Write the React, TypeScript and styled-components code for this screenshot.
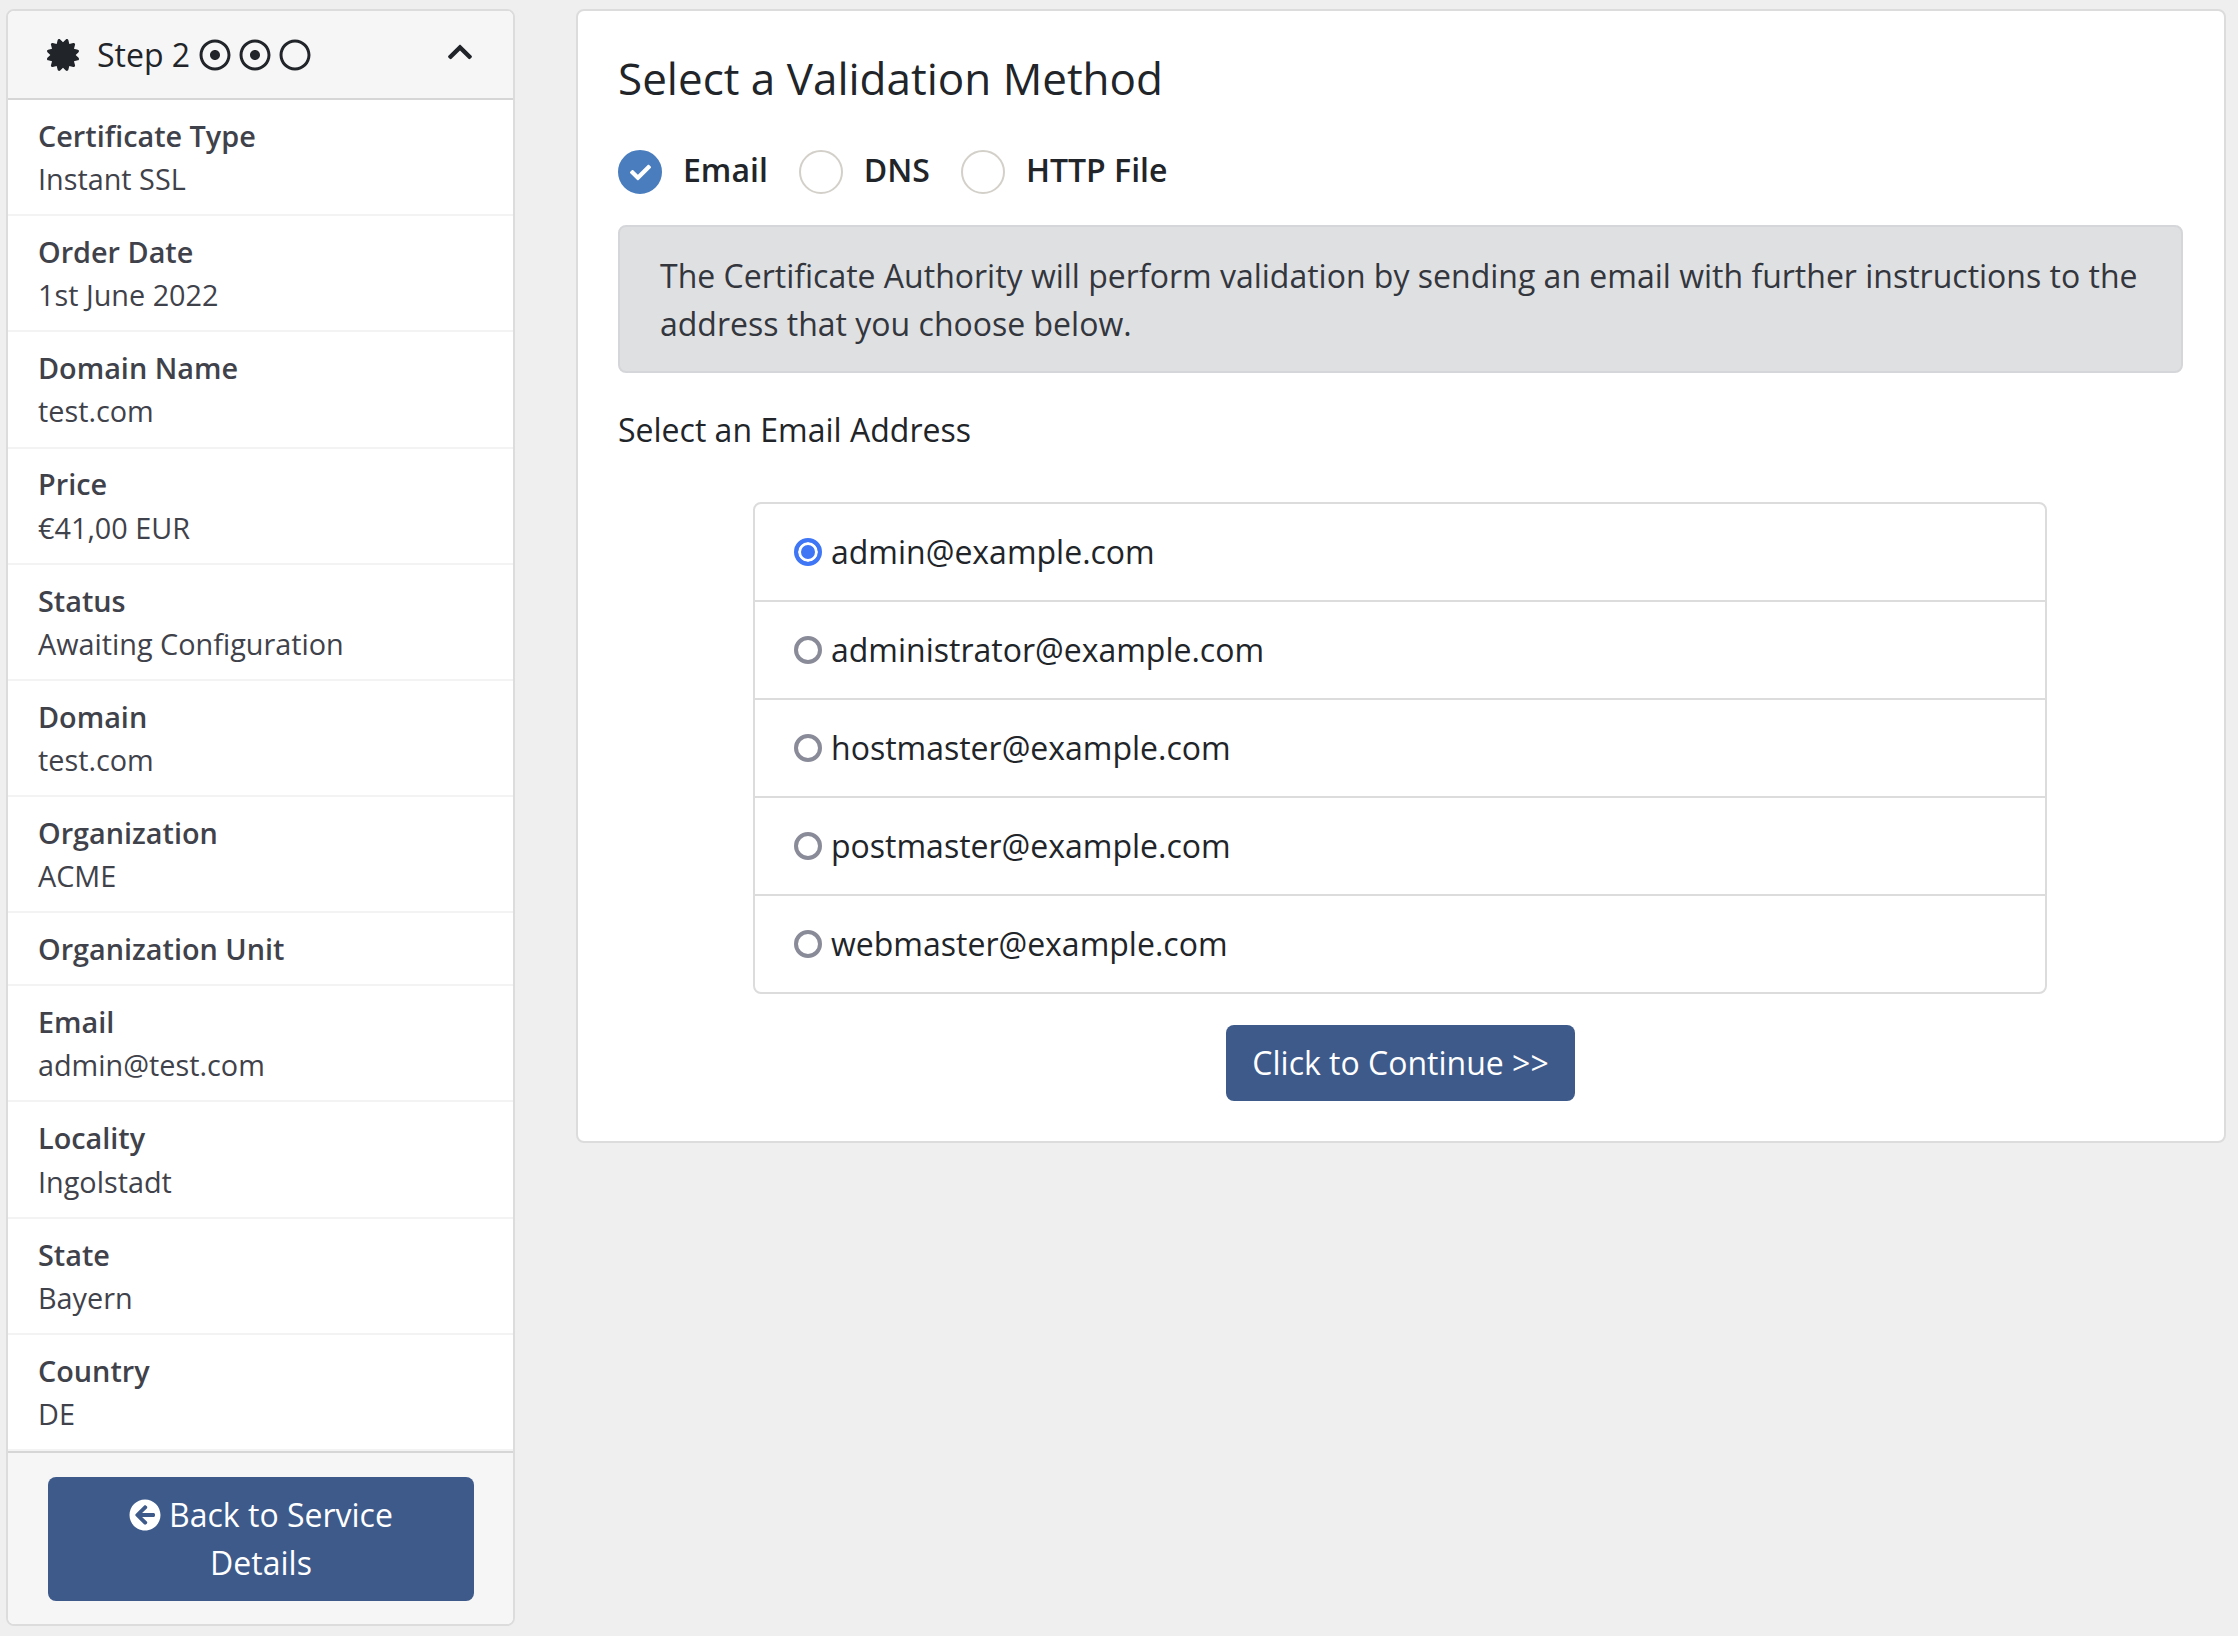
import React from "react";
import styled, { createGlobalStyle } from "styled-components";
import { FaCertificate, FaRegDotCircle, FaRegCircle, FaChevronUp, FaArrowCircleLeft, FaCheck } from "react-icons/fa";

const Global = createGlobalStyle`
  html, body { margin: 0; padding: 0; background: #efefef; }
  body { font-family: "Open Sans", "Noto Sans", sans-serif; color: #212529; font-size: 32px; line-height: 48px; }
  * { box-sizing: border-box; }
`;

const Page = styled.div`
  display: flex;
  align-items: flex-start;
  gap: 61px;
  padding: 9px 12px 0 6px;
  width: 2238px;
  height: 1636px;
  overflow: hidden;
`;

const Sidebar = styled.aside`
  width: 509px;
  flex: none;
  background: #fff;
  border: 2px solid #dcdcdc;
  border-radius: 8px;
  overflow: hidden;
`;

const SideHeader = styled.div`
  display: flex;
  align-items: center;
  height: 89px;
  padding: 0 39px 0 39px;
  background: #f6f6f6;
  border-bottom: 2px solid #d6d6d6;
  color: #212529;
`;

const Steps = styled.div`
  display: flex;
  align-items: center;
  gap: 8px;
  flex: 1;
  font-size: 32px;
  svg { font-size: 32px; }
`;

const StepLabel = styled.span`
  margin: 0 1px 0 10px;
`;

const Collapse = styled.span`
  display: flex;
  margin: -6px 0 0;
  font-size: 28px;
`;

const Row = styled.div`
  padding: 13.9px 30px;
  font-size: 28.8px;
  line-height: 43.2px;
  color: #3f424a;
  border-bottom: 2px solid #f3f3f3;
  &:last-child { border-bottom: none; }
`;

const RowLabel = styled.div`
  font-weight: 600;
`;

const SideFooter = styled.div`
  background: #f6f6f6;
  border-top: 2px solid #d6d6d6;
  padding: 24px 39px 23px 40px;
`;

const Button = styled.button`
  display: block;
  border: none;
  border-radius: 8px;
  background: #3d5a8b;
  color: #fff;
  font: inherit;
  padding: 14px 26px;
  text-align: center;
`;

const WideButton = styled(Button)`
  width: 100%;
  padding: 14px 40px;
  svg { font-size: 32px; vertical-align: -4px; margin-right: 8px; }
`;

const Main = styled.main`
  flex: 1;
  height: 1134px;
  background: #fff;
  border: 2px solid #dcdcdc;
  border-radius: 8px;
  padding: 39px 41px 40px 40px;
`;

const Title = styled.h2`
  margin: 0;
  font-weight: 400;
  font-size: 44px;
  line-height: 56px;
  color: #212529;
`;

const Methods = styled.div`
  display: flex;
  align-items: center;
  margin-top: 42px;
  height: 44px;
`;

const Method = styled.label`
  display: flex;
  align-items: center;
  gap: 21px;
  margin-right: 31px;
  font-weight: 600;
`;

const MethodDot = styled.span<{ $on?: boolean }>`
  display: flex;
  align-items: center;
  justify-content: center;
  width: 44px;
  height: 44px;
  margin: 2px 0 -2px;
  border-radius: 50%;
  color: #fff;
  font-size: 21px;
  background: ${(p) => (p.$on ? "#4a7dbd" : "#fff")};
  border: 2px solid ${(p) => (p.$on ? "#4a7dbd" : "#d3d0c9")};
`;

const Alert = styled.div`
  margin-top: 33px;
  padding: 25px 40px 23px;
  background: #dfe0e2;
  border: 2px solid #d5d6d9;
  border-radius: 8px;
  color: #33363d;
`;

const Prompt = styled.p`
  margin: 33px 0 0;
`;

const Options = styled.div`
  margin: 48px 136px 0 135px;
  border: 2px solid #dcdcdc;
  border-radius: 8px;
`;

const Option = styled.label`
  display: flex;
  align-items: center;
  gap: 9px;
  height: 98px;
  padding: 0 0 0 39px;
  border-bottom: 2px solid #dcdcdc;
  &:last-child { border-bottom: none; height: 96px; }
`;

const Dot = styled.span<{ $on?: boolean }>`
  width: 28px;
  height: 28px;
  flex: none;
  border-radius: 50%;
  background: #fff;
  border: ${(p) => (p.$on ? "4px solid #3f76f6" : "4px solid #8a8b99")};
  ${(p) => p.$on && "box-shadow: inset 0 0 0 3px #fff; background: #3f76f6;"}
`;

const Actions = styled.div`
  display: flex;
  justify-content: center;
  margin-top: 31px;
`;

const labels: [string, string?][] = [
  ["Certificate Type", "Instant SSL"],
  ["Order Date", "1st June 2022"],
  ["Domain Name", "test.com"],
  ["Price", "€41,00 EUR"],
  ["Status", "Awaiting Configuration"],
  ["Domain", "test.com"],
  ["Organization", "ACME"],
  ["Organization Unit"],
  ["Email", "admin@test.com"],
  ["Locality", "Ingolstadt"],
  ["State", "Bayern"],
  ["Country", "DE"],
];

const emails = ["admin", "administrator", "hostmaster", "postmaster", "webmaster"];

export default function App() {
  return (
    <>
      <Global />
      <Page>
        <Sidebar>
          <SideHeader>
            <Steps>
              <FaCertificate />
              <StepLabel>Step 2</StepLabel>
              <FaRegDotCircle />
              <FaRegDotCircle />
              <FaRegCircle />
            </Steps>
            <Collapse><FaChevronUp /></Collapse>
          </SideHeader>
          {labels.map(([k, v]) => (
            <Row key={k}>
              <RowLabel>{k}</RowLabel>
              {v && <div>{v}</div>}
            </Row>
          ))}
          <SideFooter>
            <WideButton><FaArrowCircleLeft />Back to Service Details</WideButton>
          </SideFooter>
        </Sidebar>
        <Main>
          <Title>Select a Validation Method</Title>
          <Methods>
            <Method><MethodDot $on><FaCheck /></MethodDot>Email</Method>
            <Method><MethodDot />DNS</Method>
            <Method><MethodDot />HTTP File</Method>
          </Methods>
          <Alert>The Certificate Authority will perform validation by sending an email with further instructions to the address that you choose below.</Alert>
          <Prompt>Select an Email Address</Prompt>
          <Options>
            {emails.map((e, i) => (
              <Option key={e}><Dot $on={i === 0} />{e}@example.com</Option>
            ))}
          </Options>
          <Actions><Button>Click to Continue &gt;&gt;</Button></Actions>
        </Main>
      </Page>
    </>
  );
}
